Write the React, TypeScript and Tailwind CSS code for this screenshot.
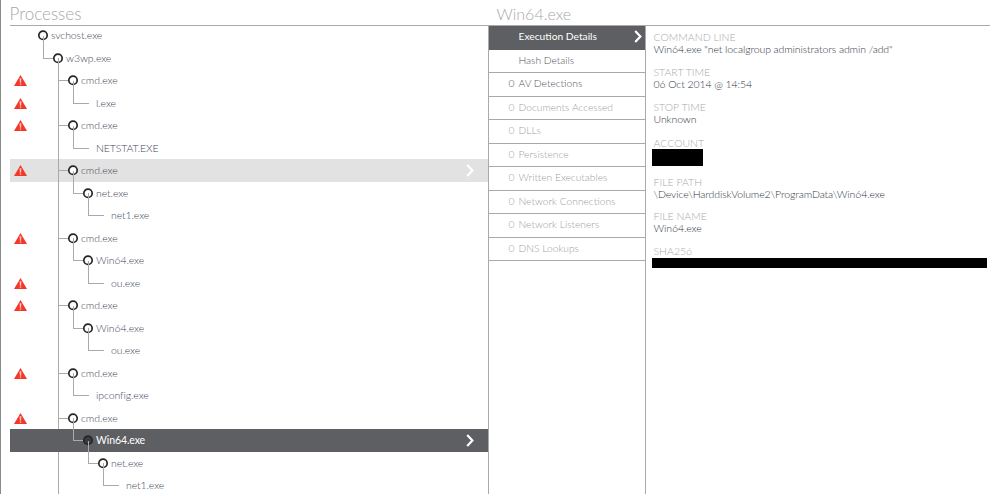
const font = "font-['Lato','Liberation_Sans',sans-serif]";

type Proc = { name: string; depth: number; leaf?: boolean; alert?: boolean; state?: "hover" | "active" };

const procs: Proc[] = [
  { name: "svchost.exe", depth: 0 },
  { name: "w3wp.exe", depth: 1 },
  { name: "cmd.exe", depth: 2, alert: true },
  { name: "l.exe", depth: 3, leaf: true, alert: true },
  { name: "cmd.exe", depth: 2, alert: true },
  { name: "NETSTAT.EXE", depth: 3, leaf: true },
  { name: "cmd.exe", depth: 2, alert: true, state: "hover" },
  { name: "net.exe", depth: 3 },
  { name: "net1.exe", depth: 4, leaf: true },
  { name: "cmd.exe", depth: 2, alert: true },
  { name: "Win64.exe", depth: 3 },
  { name: "ou.exe", depth: 4, leaf: true, alert: true },
  { name: "cmd.exe", depth: 2, alert: true },
  { name: "Win64.exe", depth: 3 },
  { name: "ou.exe", depth: 4, leaf: true },
  { name: "cmd.exe", depth: 2, alert: true },
  { name: "ipconfig.exe", depth: 3, leaf: true },
  { name: "cmd.exe", depth: 2, alert: true },
  { name: "Win64.exe", depth: 3, state: "active" },
  { name: "net.exe", depth: 4 },
  { name: "net1.exe", depth: 5, leaf: true },
];

const indent = ["pl-[24.5px]", "pl-[39.5px]", "pl-[54.5px]", "pl-[69.5px]", "pl-[84.5px]", "pl-[99.5px]"];

const menu = [
  { label: "Execution Details", active: true },
  { label: "Hash Details" },
  { label: "AV Detections", count: 0, dark: true },
  { label: "Documents Accessed", count: 0 },
  { label: "DLLs", count: 0 },
  { label: "Persistence", count: 0 },
  { label: "Written Executables", count: 0 },
  { label: "Network Connections", count: 0 },
  { label: "Network Listeners", count: 0 },
  { label: "DNS Lookups", count: 0 },
];

function Alert() {
  return (
    <svg width="13" height="11" viewBox="0 0 13 11" className="shrink-0">
      <path d="M6.5 0 L13 11 L0 11 Z" fill="#f2382a" />
      <path d="M5.6 3.2 H7.4 L7.1 7.8 H5.9 Z M5.8 8.4 H7.2 V9.8 H5.8 Z" fill="#ffc9c2" />
    </svg>
  );
}

function Chevron() {
  return (
    <svg width="8" height="13" viewBox="0 0 8 13" className="shrink-0">
      <path d="M1.2 1 L6.4 6.5 L1.2 12" fill="none" stroke="#fff" strokeWidth="2.2" />
    </svg>
  );
}

function Lines({ p, index }: { p: Proc; index: number }) {
  const mid = 11.25;
  const cx = 33 + p.depth * 15;
  const px = cx - 15;
  const trunk = index >= 2 && p.state !== "active";
  return (
    <svg className="absolute inset-0 h-full w-full overflow-visible">
      {trunk && <line x1="48" y1="0" x2="48" y2="23" stroke="#aaaaaa" shapeRendering="crispEdges" />}
      {index === 1 && <line x1="48" y1={mid} x2="48" y2="23" stroke="#aaaaaa" shapeRendering="crispEdges" />}
      {index > 0 && (
        <path
          d={`M${px} ${mid - 22.5} V${mid} H${p.leaf ? px + 16 : cx}`}
          fill="none"
          stroke="#aaaaaa"
          shapeRendering="crispEdges"
        />
      )}
      {!p.leaf && (
        <circle cx={cx} cy={mid} r="4.2" fill={p.state === "active" ? "#3c3c3e" : "#fff"} stroke="#262626" strokeWidth="1.7" />
      )}
    </svg>
  );
}

function ProcRow({ p, index }: { p: Proc; index: number }) {
  const bg = p.state === "active" ? "bg-[#5e5f62]" : p.state === "hover" ? "bg-[#e2e2e2]" : "";
  const color = p.state === "active" ? "text-white font-normal" : "text-[#434857]";
  return (
    <div className={`relative flex h-[22.5px] items-center pl-[5px] pr-[14px] ${bg}`}>
      <Lines p={p} index={index} />
      <div className="flex w-[12px] shrink-0 justify-center">{p.alert && <Alert />}</div>
      <div className={`relative flex-1 -translate-y-[0.5px] text-[10.5px] leading-none tracking-[-0.1px] ${indent[p.depth]} ${color}`}>{p.name}</div>
      {p.state && <Chevron />}
    </div>
  );
}

function MenuRow({ item }: { item: (typeof menu)[number] }) {
  if (item.active) {
    return (
      <div className="flex h-[23.5px] items-center bg-[#5e5f62] pb-[2px] pl-[30px] pr-[3px] text-[10.25px] text-white">
        <span className="flex-1 font-normal">{item.label}</span>
        <Chevron />
      </div>
    );
  }
  const color = item.dark || item.count === undefined ? "text-[#50545e]" : "text-[#a0a0a0]";
  return (
    <div className={`flex h-[23.5px] items-center border-b border-[#aaaaaa] pb-[1px] text-[10.25px] ${color}`}>
      <span className="w-[27px] pr-[1px] text-right">{item.count}</span>
      <span className="pl-[3px]">{item.label}</span>
    </div>
  );
}

function Field({ label, value, className }: { label: string; value: string; className: string }) {
  return (
    <div className={className}>
      <div className="h-[12px] text-[10.5px] leading-[12px] text-[#aaaaaa]">{label}</div>
      <div className="h-[12px] text-[10.5px] leading-[12px] tracking-[-0.1px] text-[#2f3644]">{value}</div>
    </div>
  );
}

export default function App() {
  return (
    <div className={`flex h-[494px] w-[990px] overflow-hidden border-l-[1.5px] border-[#8a8a8a] bg-white pl-[8.5px] font-light ${font}`}>
      <div className="flex min-w-0 flex-1 flex-col">
        <div className="flex h-[26px] shrink-0 border-b border-[#aaaaaa] text-[17px] leading-[27px] text-[#a8a8a8]">
          <div className="w-[487px]">Processes</div>
          <div className="text-[16px]">Win64.exe</div>
        </div>
        <div className="flex min-h-0 flex-1">
          <div className="-mt-[1.75px] w-[478px] shrink-0">
            {procs.map((p, i) => (
              <ProcRow key={i} p={p} index={i} />
            ))}
          </div>
          <div className="h-full w-[158px] shrink-0 border-x border-[#aaaaaa]">
            {menu.map((item) => (
              <MenuRow key={item.label} item={item} />
            ))}
          </div>
          <div className="flex-1 pl-[6px] pr-[3px] pt-[5px]">
            <div className="pl-[2px]">
              <Field className="mb-[11px]" label="COMMAND LINE" value={'Win64.exe "net localgroup administrators admin /add"'} />
              <Field className="mb-[11px]" label="START TIME" value="06 Oct 2014 @ 14:54" />
              <Field className="mb-[12px]" label="STOP TIME" value="Unknown" />
              <div className="h-[12px] text-[10.5px] leading-[12px] text-[#aaaaaa]">ACCOUNT</div>
            </div>
            <div className="mb-[10px] h-[17px] w-[51px] bg-black" />
            <div className="pl-[2px]">
              <Field className="mb-[10px]" label="FILE PATH" value="\Device\HarddiskVolume2\ProgramData\Win64.exe" />
              <Field className="mb-[11px]" label="FILE NAME" value="Win64.exe" />
              <div className="h-[12px] text-[10.5px] leading-[12px] text-[#aaaaaa]">SHA256</div>
            </div>
            <div className="mt-px h-[10px] w-[335px] bg-black" />
          </div>
        </div>
      </div>
    </div>
  );
}
